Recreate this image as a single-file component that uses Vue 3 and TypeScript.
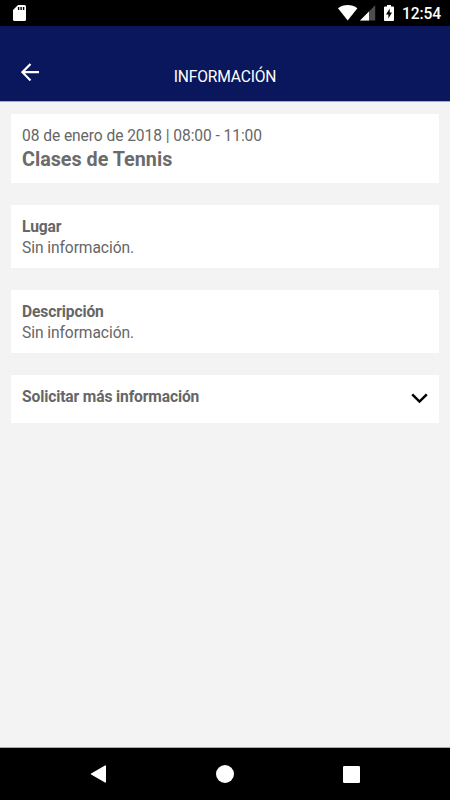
<script setup lang="ts">
interface InfoSection {
  title: string
  text: string
}

const sections: InfoSection[] = [
  { title: 'Lugar', text: 'Sin información.' },
  { title: 'Descripción', text: 'Sin información.' },
]
</script>

<template>
  <div class="screen">
    <div class="status">
      <svg class="sd" width="13" height="16" viewBox="0 0 13 16">
        <path d="M5 0H11.5Q13 0 13 1.5V14.5Q13 16 11.5 16H1.5Q0 16 0 14.5V5Z" fill="#fff" />
        <path d="M5.6 2V5M8.1 2V5M10.6 2V5" stroke="#000" stroke-width="1.4" />
      </svg>
      <div class="indicators">
        <svg class="wifi" width="20" height="16" viewBox="0 0 20 16">
          <path d="M0 3.300Q4.300 0 9.700 0T19.400 3.300L9.700 15.600Z" fill="#fff" />
        </svg>
        <svg class="signal" width="16" height="16" viewBox="0 0 16 16">
          <path d="M0 15.600L15.200 .2V15.600Z" fill="#4d4d4d" />
          <path d="M0 15.600L9 6.500V15.600Z" fill="#fff" />
        </svg>
        <svg class="battery" width="10" height="16" viewBox="0 0 10 16">
          <path d="M3 0H7V1.500H9Q10 1.500 10 2.500V15Q10 16 9 16H1Q0 16 0 15V2.500Q0 1.500 1 1.500H3Z" fill="#fff" />
          <path d="M5.700 3.600L2 9.500H4.400V13.500L8 7.600H5.700Z" fill="#000" />
        </svg>
        <span class="clock">12:54</span>
      </div>
    </div>

    <header class="toolbar">
      <svg class="back" width="18" height="18" viewBox="0 0 18 18">
        <path d="M9.500 1L1.400 9.200L9.500 17.400M1.500 9.200H18" fill="none" stroke="#fff" stroke-width="2.200" />
      </svg>
      <h1>INFORMACIÓN</h1>
    </header>

    <main>
      <section class="card summary">
        <p>08 de enero de 2018 | 08:00 - 11:00</p>
        <h2>Clases de Tennis</h2>
      </section>
      <section v-for="s in sections" :key="s.title" class="card detail">
        <h3>{{ s.title }}</h3>
        <p>{{ s.text }}</p>
      </section>
      <section class="card request">
        <h3>Solicitar más información</h3>
        <svg width="17" height="11" viewBox="0 0 17 11">
          <path d="M1.200 1.300L8.500 8.600L15.800 1.300" fill="none" stroke="#000" stroke-width="2.500" />
        </svg>
      </section>
    </main>

    <nav class="navbar">
      <svg width="16" height="18" viewBox="0 0 16 18">
        <path d="M1.500 9L15.300 1V17Z" fill="#fff" stroke="#fff" stroke-width="1.400" stroke-linejoin="round" />
      </svg>
      <svg width="18" height="18" viewBox="0 0 18 18"><circle cx="9" cy="9" r="9" fill="#fff" /></svg>
      <svg width="17" height="17" viewBox="0 0 17 17"><rect width="17" height="17" rx="1.200" fill="#fff" /></svg>
    </nav>
  </div>
</template>

<style>
body {
  margin: 0;
}
</style>

<style scoped>
.screen {
  width: 450px;
  height: 800px;
  display: flex;
  flex-direction: column;
  background: #f3f3f3;
  font-family: Roboto, sans-serif;
  color: #666;
  overflow: hidden;
}
svg {
  display: block;
  flex: none;
}
h1, h2, h3, p {
  margin: 0;
}
.status {
  box-sizing: border-box;
  height: 26px;
  padding: 5px 9px 0 13px;
  display: flex;
  justify-content: space-between;
  background: #000;
}
.indicators {
  display: flex;
}
.signal {
  margin-left: 2px;
}
.battery {
  margin-left: 8px;
}
.clock {
  margin-left: 8px;
  color: #fff;
  font-size: 15.600px;
  font-weight: 500;
  line-height: 18px;
  letter-spacing: -0.1px;
}
.toolbar {
  box-sizing: border-box;
  height: 76px;
  padding: 37px 21px 0;
  display: grid;
  grid-template-columns: 18px 1fr 18px;
  background: #0a175c;
  border-bottom: 1px solid #a9a9b8;
}
.toolbar h1 {
  padding-top: 5px;
  color: #fff;
  font-size: 15.600px;
  font-weight: 400;
  line-height: 18px;
  letter-spacing: -0.17px;
  text-align: center;
}
main {
  flex: 1;
  padding: 12px 11px 0;
  display: flex;
  flex-direction: column;
  gap: 22px;
}
.card {
  box-sizing: border-box;
  padding: 12px 11px 0;
  background: #fff;
}
.card p,
.card h3 {
  font-size: 15.600px;
  line-height: 21px;
  letter-spacing: -0.075px;
}
.card h3 {
  font-weight: 700;
  letter-spacing: -0.13px;
}
.card h2 {
  font-size: 19.750px;
  font-weight: 700;
  line-height: 26px;
  color: #6b6b6b;
}
.summary {
  height: 69px;
}
.detail {
  height: 63px;
}
.request {
  height: 48px;
  display: flex;
  justify-content: space-between;
}
.request svg {
  margin-top: 6px;
}
.navbar {
  box-sizing: border-box;
  height: 53px;
  padding: 0 90px;
  display: flex;
  align-items: center;
  justify-content: space-between;
  background: #000;
  border-top: 1px solid #a8a8a8;
}
</style>
